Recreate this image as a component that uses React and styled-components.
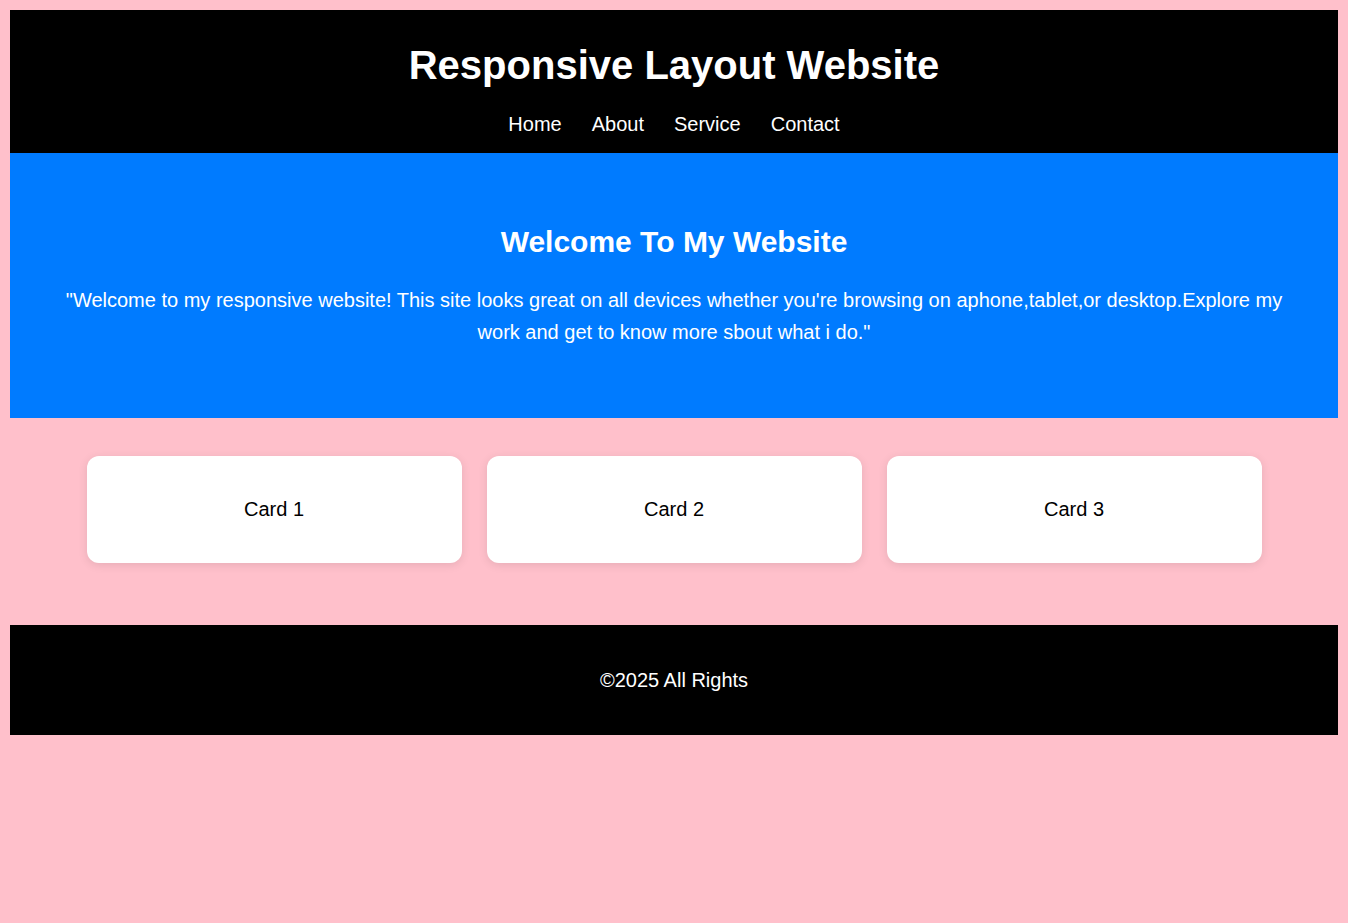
import React from "react";
import styled, { createGlobalStyle } from "styled-components";

const Global = createGlobalStyle`
  html, body { margin: 0; padding: 0; }
  body {
    background: #ffc0cb;
    font-family: "Liberation Sans", Arial, sans-serif;
    padding: 10px;
  }
`;

const Header = styled.header`
  background: #000;
  color: #fff;
  text-align: center;
  padding: 20px 0 17px;
`;

const Title = styled.h1`
  margin: 12px 0 25px;
  font-size: 40px;
  font-weight: bold;
  line-height: 46px;
`;

const Nav = styled.nav`
  display: flex;
  justify-content: center;
  gap: 30px;
`;

const NavLink = styled.a`
  color: #fff;
  text-decoration: none;
  font-size: 20px;
  line-height: 23px;
`;

const Hero = styled.section`
  background: #007bff;
  color: #fff;
  text-align: center;
  padding: 50px 40px;
`;

const HeroTitle = styled.h2`
  margin: 22px 0 25px;
  font-size: 30px;
  line-height: 34px;
`;

const HeroText = styled.p`
  margin: 0 0 20px;
  font-size: 20px;
  line-height: 32px;
`;

const Cards = styled.section`
  display: flex;
  justify-content: center;
  gap: 25px;
  padding: 38px 0 62px;
`;

const Card = styled.div`
  width: 375px;
  height: 107px;
  background: #fff;
  border-radius: 12px;
  box-shadow: 0 2px 10px rgba(0, 0, 0, 0.1);
  display: flex;
  align-items: center;
  justify-content: center;
  font-size: 20px;
  color: #000;
`;

const Footer = styled.footer`
  background: #000;
  color: #fff;
  text-align: center;
  height: 110px;
  display: flex;
  align-items: center;
  justify-content: center;
  font-size: 20px;
`;

export default function App() {
  return (
    <>
      <Global />
      <Header>
        <Title>Responsive Layout Website</Title>
        <Nav>
          <NavLink href="#">Home</NavLink>
          <NavLink href="#">About</NavLink>
          <NavLink href="#">Service</NavLink>
          <NavLink href="#">Contact</NavLink>
        </Nav>
      </Header>
      <Hero>
        <HeroTitle>Welcome To My Website</HeroTitle>
        <HeroText>
          "Welcome to my responsive website! This site looks great on all devices whether you're browsing on aphone,tablet,or desktop.Explore my work and get to know more sbout what i do."
        </HeroText>
      </Hero>
      <Cards>
        <Card>Card 1</Card>
        <Card>Card 2</Card>
        <Card>Card 3</Card>
      </Cards>
      <Footer>©2025 All Rights</Footer>
    </>
  );
}
